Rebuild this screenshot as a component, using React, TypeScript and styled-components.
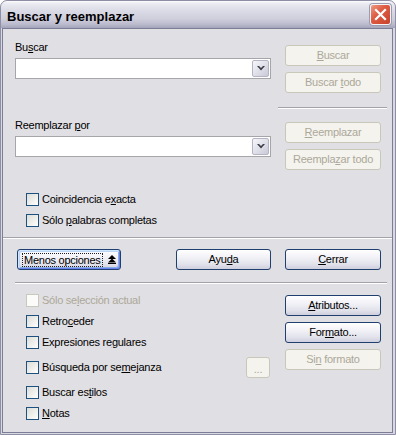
import React from 'react';
import styled, { createGlobalStyle, css } from 'styled-components';

const GlobalStyle = createGlobalStyle`
  html, body {
    margin: 0;
    padding: 0;
    background: #ffffff;
  }
  body {
    font-family: "Liberation Sans", Arial, sans-serif;
  }
`;

const Window = styled.div`
  box-sizing: border-box;
  width: 396px;
  height: 435px;
  display: flex;
  flex-direction: column;
  border: 1px solid #8e8ea6;
  border-radius: 7px 7px 0 0;
  background: #d8d8e2;
  padding: 0 2px 1px 1px;
  overflow: hidden;
`;

const TitleBar = styled.div`
  flex: none;
  height: 27px;
  margin: 0 -2px 0 -1px;
  padding: 0 4px 0 6px;
  display: flex;
  align-items: flex-start;
  justify-content: space-between;
  border-radius: 6px 6px 0 0;
  background: linear-gradient(
    to bottom,
    #fdfdfe 0%,
    #eaeaf1 10%,
    #dcdce7 35%,
    #cfcfdd 65%,
    #b9b9cc 88%,
    #a3a3ba 100%
  );
`;

const TitleText = styled.div`
  margin-top: 8px;
  font-size: 13px;
  line-height: 15px;
  font-weight: 700;
  color: #000;
`;

const CloseButton = styled.div`
  box-sizing: border-box;
  width: 21px;
  height: 21px;
  margin-top: 3px;
  border: 1px solid #f4f4f8;
  border-radius: 3px;
  background: linear-gradient(135deg, #ec9a84 0%, #df5d44 40%, #c8412b 100%);
  box-shadow: 0 0 0 1px #9c9cb0;
  display: flex;
  align-items: center;
  justify-content: center;
`;

const Body = styled.div`
  flex: 1;
  display: flex;
  flex-direction: column;
  border: 1px solid #7d7d98;
  background: #e0dfe3;
  padding: 0 11px 0 12px;
  font-size: 11px;
  line-height: 13px;
  letter-spacing: -0.25px;
  color: #000;
`;

const Columns = styled.div<{ $top: number }>`
  display: grid;
  grid-template-columns: 256px 96px;
  column-gap: 14px;
  align-items: start;
  margin-top: ${p => p.$top}px;
`;

const Stack = styled.div<{ $gap?: number }>`
  display: flex;
  flex-direction: column;
  gap: ${p => p.$gap ?? 0}px;
`;

const FieldLabel = styled.div<{ $top: number }>`
  margin-top: ${p => p.$top}px;
  margin-bottom: 4px;
`;

const Key = styled.span`
  text-decoration: underline;
  text-underline-offset: 1px;
`;

const Combo = styled.div`
  box-sizing: border-box;
  height: 21px;
  border: 1px solid #a5a5aa;
  background: #ffffff;
  padding: 1px;
  display: flex;
  justify-content: flex-end;
`;

const DropButton = styled.div`
  box-sizing: border-box;
  width: 17px;
  height: 17px;
  border: 1px solid #b4b4c4;
  border-radius: 2px;
  background: linear-gradient(135deg, #f6f6fa 0%, #dedee8 55%, #c9c9d8 100%);
  display: flex;
  align-items: center;
  justify-content: center;
`;

const PushButton = styled.div<{ $kind?: 'normal' | 'default' | 'disabled'; $width?: number; $top?: number }>`
  box-sizing: border-box;
  flex: none;
  width: ${p => p.$width ?? 96}px;
  height: 21px;
  margin-top: ${p => p.$top ?? 0}px;
  border-radius: 3px;
  display: flex;
  align-items: center;
  justify-content: center;
  white-space: nowrap;
  ${p =>
    p.$kind === 'disabled'
      ? css`
          border: 1px solid #c9c7ba;
          background: #f4f3ee;
          color: #aca899;
        `
      : css`
          border: 1px solid #1f3f6f;
          background: linear-gradient(to bottom, #ffffff 0%, #f3f3f8 35%, #e2e2ec 75%, #cfcfde 100%);
          color: #000;
        `}
  ${p =>
    p.$kind === 'default' &&
    css`
      justify-content: flex-start;
      padding-left: 4px;
      box-shadow: inset 1px 1px 0 #cee7ff, inset -1px -1px 0 #6982ee, inset 2px 2px 0 #bcd4f6,
        inset -2px -2px 0 #89ade4;
    `}
`;

const FocusRing = styled.span`
  border: 1px dotted #202020;
  padding: 0 1px;
  line-height: 12px;
`;

const Separator = styled.div<{ $top: number; $left?: number; $right?: number }>`
  height: 0;
  margin: ${p => p.$top}px ${p => p.$right ?? 0}px 0 ${p => p.$left ?? 0}px;
  border-top: 1px solid #a3a2a8;
  border-bottom: 1px solid #ffffff;
`;

const ButtonRow = styled.div`
  display: flex;
  align-items: center;
  gap: 14px;
  margin-top: 10px;
  padding-left: 2px;
`;

const Spacer = styled.div`
  flex: 1;
`;

const CheckList = styled.div<{ $top: number }>`
  display: flex;
  flex-direction: column;
  gap: 8px;
  margin-top: ${p => p.$top}px;
`;

const CheckRow = styled.div<{ $disabled?: boolean }>`
  display: flex;
  align-items: center;
  gap: 3px;
  padding-left: 11px;
  color: ${p => (p.$disabled ? '#aca899' : '#000')};
`;

const CheckBox = styled.span<{ $disabled?: boolean }>`
  box-sizing: border-box;
  flex: none;
  width: 13px;
  height: 13px;
  border: 1px solid ${p => (p.$disabled ? '#cac8bb' : '#1c5180')};
  background: ${p =>
    p.$disabled ? '#fbfbf9' : 'linear-gradient(135deg, #dcdcd7 0%, #efefec 55%, #ffffff 100%)'};
`;

const SmallButton = styled(PushButton)`
  margin-left: auto;
  margin-right: 1px;
  align-items: flex-end;
  padding-bottom: 3px;
  line-height: 10px;
`;

const MoreIcon = styled.svg`
  margin-left: 5px;
  flex: none;
`;

type CheckProps = { label: React.ReactNode; disabled?: boolean; children?: React.ReactNode };

const Check = ({ label, disabled, children }: CheckProps) => (
  <CheckRow $disabled={disabled}>
    <CheckBox $disabled={disabled} />
    <span>{label}</span>
    {children}
  </CheckRow>
);

const ComboBox = () => (
  <Combo>
    <DropButton>
      <svg width="8" height="5" viewBox="0 0 8 5">
        <path d="M0 0 H2 L4 2 L6 0 H8 L4 4.5 Z" fill="#3c3c48" />
      </svg>
    </DropButton>
  </Combo>
);

export default function App() {
  return (
    <>
      <GlobalStyle />
      <Window>
        <TitleBar>
          <TitleText>Buscar y reemplazar</TitleText>
          <CloseButton>
            <svg width="13" height="13" viewBox="0 0 13 13">
              <path d="M2 2 L11 11 M11 2 L2 11" stroke="#ffffff" strokeWidth="2.2" strokeLinecap="square" />
            </svg>
          </CloseButton>
        </TitleBar>
        <Body>
          <Columns $top={0}>
            <Stack>
              <FieldLabel $top={12}>
                Bu<Key>s</Key>car
              </FieldLabel>
              <ComboBox />
              <FieldLabel $top={40}>
                Reemplazar <Key>p</Key>or
              </FieldLabel>
              <ComboBox />
              <CheckList $top={36}>
                <Check label={<>Coincidencia e<Key>x</Key>acta</>} />
                <Check label={<>Sólo <Key>p</Key>alabras completas</>} />
              </CheckList>
            </Stack>
            <Stack $gap={6}>
              <PushButton $kind="disabled" $top={16}>
                <span>
                  <Key>B</Key>uscar
                </span>
              </PushButton>
              <PushButton $kind="disabled">
                <span>
                  Buscar <Key>t</Key>odo
                </span>
              </PushButton>
              <Separator $top={8} $left={-7} $right={-6} />
              <PushButton $kind="disabled" $top={7}>
                <span>
                  <Key>R</Key>eemplazar
                </span>
              </PushButton>
              <PushButton $kind="disabled">
                <span>
                  Reempla<Key>z</Key>ar todo
                </span>
              </PushButton>
            </Stack>
          </Columns>

          <Separator $top={10} $left={-12} $right={-11} />

          <ButtonRow>
            <PushButton $kind="default" $width={104}>
              <FocusRing>Menos opciones</FocusRing>
              <MoreIcon width="8" height="9" viewBox="0 0 8 9">
                <path d="M4 0 L8 4 H0 Z M4 3.5 L8 7.5 H0 Z" fill="#000" />
                <rect x="0" y="8" width="8" height="1" fill="#000" />
              </MoreIcon>
            </PushButton>
            <Spacer />
            <PushButton $width={95}>
              <span>
                Ayu<Key>d</Key>a
              </span>
            </PushButton>
            <PushButton>
              <span>
                <Key>C</Key>errar
              </span>
            </PushButton>
          </ButtonRow>

          <Separator $top={12} $right={-6} />

          <Columns $top={0}>
            <CheckList $top={10}>
              <Check disabled label={<>Sólo se<Key>l</Key>ección actual</>} />
              <Check label={<>Retro<Key>c</Key>eder</>} />
              <Check label={<>Expresiones re<Key>g</Key>ulares</>} />
              <Check label={<>Búsqueda por se<Key>m</Key>ejanza</>}>
                <SmallButton $kind="disabled" $width={24}>
                  ...
                </SmallButton>
              </Check>
              <Check label={<>Buscar es<Key>t</Key>ilos</>} />
              <Check label={<><Key>N</Key>otas</>} />
            </CheckList>
            <Stack $gap={6}>
              <PushButton $top={11}>
                <span>
                  <Key>A</Key>tributos...
                </span>
              </PushButton>
              <PushButton>
                <span>
                  For<Key>m</Key>ato...
                </span>
              </PushButton>
              <PushButton $kind="disabled">
                <span>
                  Si<Key>n</Key> formato
                </span>
              </PushButton>
            </Stack>
          </Columns>
        </Body>
      </Window>
    </>
  );
}
